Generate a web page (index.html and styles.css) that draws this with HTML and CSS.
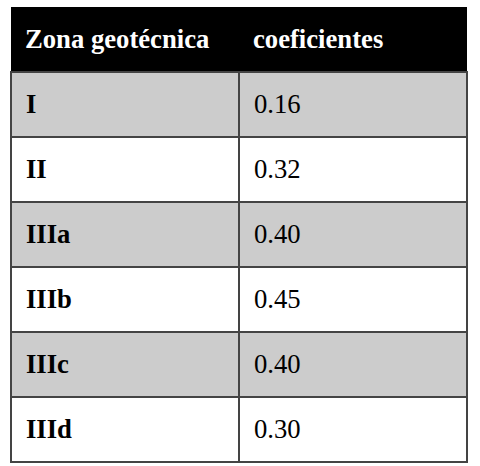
FILE: index.html
```html
<!DOCTYPE html>
<html>
<head>
<meta charset="utf-8">
<link rel="stylesheet" href="styles.css">
</head>
<body>
<table class="coef">
  <thead>
    <tr><th class="c1">Zona geotécnica</th><th class="c2">coeficientes</th></tr>
  </thead>
  <tbody>
    <tr class="alt"><td class="zone">I</td><td>0.16</td></tr>
    <tr><td class="zone">II</td><td>0.32</td></tr>
    <tr class="alt"><td class="zone">IIIa</td><td>0.40</td></tr>
    <tr><td class="zone">IIIb</td><td>0.45</td></tr>
    <tr class="alt"><td class="zone">IIIc</td><td>0.40</td></tr>
    <tr><td class="zone">IIId</td><td>0.30</td></tr>
  </tbody>
</table>
</body>
</html>
```
FILE: styles.css
```css
html, body {
  margin: 0;
  padding: 0;
  background: #fff;
}
body {
  padding: 7px 0 0 10px;
  font-family: "Liberation Serif", "Times New Roman", serif;
  font-size: 26.67px;
  color: #000;
}
.coef {
  border-collapse: collapse;
  width: 458px;
  table-layout: fixed;
}
.coef th {
  background: #000;
  color: #fff;
  font-weight: bold;
  text-align: left;
  height: 65px;
  padding: 0 0 0 14px;
  box-sizing: border-box;
  border: none;
}
.coef th.c1 { width: 228px; }
.coef td {
  border: 2px solid #444;
  height: 65px;
  padding: 0 0 0 14px;
  box-sizing: border-box;
}
.coef tr.alt td {
  background: #cccccc;
}
.coef td.zone {
  font-weight: bold;
}
```
